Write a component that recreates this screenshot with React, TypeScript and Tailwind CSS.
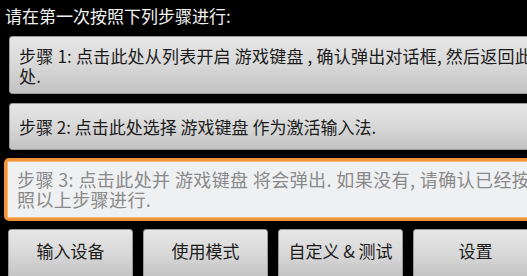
const font = { fontFamily: '"Noto Sans CJK SC", "Noto Sans", sans-serif' };

function GrayButton({ children, className = '' }: { children: React.ReactNode; className?: string }) {
  return (
    <div
      className={
        'rounded-[3px] border border-[#9a9a9a] bg-gradient-to-b from-[#e6e6e6] via-[#d8d8d8] to-[#c2c2c2] text-[#1c1c1c] ' +
        className
      }
    >
      {children}
    </div>
  );
}

const tabs = ['输入设备', '使用模式', '自定义 & 测试', '设置'];

export default function App() {
  return (
    <div className="h-[276px] w-[527px] overflow-hidden bg-black" style={font}>
      <div className="w-[548px]">
        <p className="pl-[5px] pt-[5px] text-[17px] leading-[22px] text-[#f2f2f2]">请在第一次按照下列步骤进行:</p>

        <div className="mt-[9px] flex flex-col">
          <GrayButton className="ml-[9px] mr-[10px] h-[58px] px-[9px] py-[9px] text-[17px] leading-[20px] tracking-[0.2px]">
            <div className="whitespace-nowrap">步骤 1: 点击此处从列表开启 游戏键盘 , 确认弹出对话框, 然后返回此</div>
            <div>处.</div>
          </GrayButton>

          <GrayButton className="ml-[9px] mr-[10px] mt-[9px] flex h-[47px] items-center px-[9px] text-[17px] leading-[20px]">
            步骤 2: 点击此处选择 游戏键盘 作为激活输入法.
          </GrayButton>

          <div className="ml-[4px] mr-[5px] mt-[8px] h-[63px] rounded-[5px] border-[3px] border-[#f1923a] bg-[#eff0f2] px-[10px] pt-[8px] text-[18px] leading-[20px] tracking-[0.4px] text-[#8a8a8a] shadow-[inset_0_0_0_1px_#f7b871]">
            <div className="whitespace-nowrap">步骤 3: 点击此处并 游戏键盘 将会弹出. 如果没有, 请确认已经按</div>
            <div>照以上步骤进行.</div>
          </div>

          <div className="mt-[8px] flex gap-[10px] pl-[8px]">
            {tabs.map((t) => (
              <GrayButton key={t} className="flex h-[50px] w-[125px] shrink-0 items-start justify-center pt-[11px] text-[17px] leading-[20px]">
                {t}
              </GrayButton>
            ))}
          </div>
        </div>
      </div>
    </div>
  );
}
